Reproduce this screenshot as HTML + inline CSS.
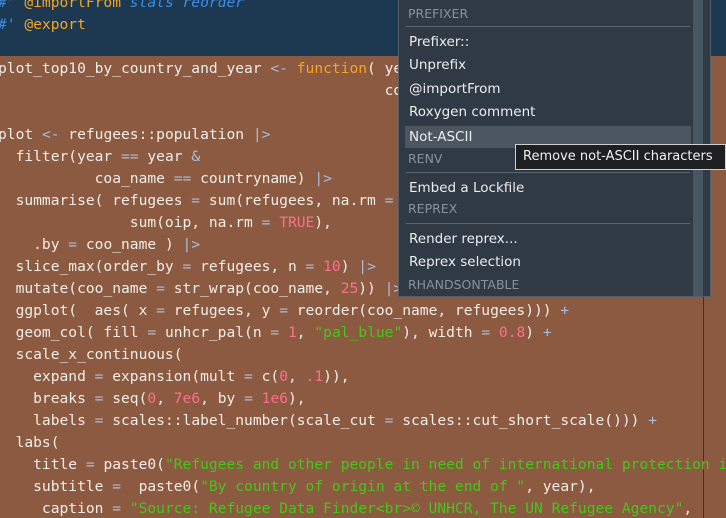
<!DOCTYPE html>
<html><head><meta charset="utf-8"><style>
html,body{margin:0;width:726px;height:518px;overflow:hidden;}
body{position:relative;background:#8b5a40;}
#blue{position:absolute;left:0;top:0;width:726px;height:56px;background:#1d3851;}
#code{position:absolute;left:-2px;top:-8px;width:728px;overflow:hidden;font-family:"DejaVu Sans Mono","Liberation Mono",monospace;font-size:14.6px;line-height:22px;color:#f2ede8;white-space:pre;}
.o{color:#a9bde0}.k{color:#f5a623}.s{color:#45c81a}.n{color:#ff6f8e}.c{color:#3d8ee6;font-style:italic}.t{color:#f5a623}
#margin{position:absolute;left:703px;top:0;width:1px;height:518px;background:#2a3550;}
#menu{position:absolute;left:398px;top:-2px;width:311px;height:297px;background:#2f3a44;border:1px solid #55606b;font-family:"DejaVu Sans","Liberation Sans",sans-serif;font-size:13.5px;color:#ebedef;}
#sb{position:absolute;left:294px;top:0;width:10px;height:297px;background:#4a5661;}
.h{position:absolute;left:9px;color:#8a9199;font-size:12.5px;}
.i{position:absolute;left:10px;}
.sep{position:absolute;left:7px;width:284px;height:1px;background:#5a6570;}
#hl{position:absolute;left:6px;top:127px;width:286px;height:22px;background:#4c5661;}
#tip{position:absolute;left:515px;top:144px;width:202px;height:24px;background:#1e1f21;border:1px solid #cfcfcf;font-family:"DejaVu Sans","Liberation Sans",sans-serif;font-size:13px;color:#f0f0f0;line-height:24px;padding-left:7px;white-space:nowrap;overflow:hidden;}
</style></head><body>
<div id="blue"></div>
<div id="margin"></div>
<div id="code"><span class="c">#' </span><span class="t">@importFrom</span><span class="c"> stats reorder</span>
<span class="c">#' </span><span class="t">@export</span>

plot_top10_by_country_and_year <span class="o">&lt;-</span> <span class="k">function</span>( year,
                                            countryname) {

plot <span class="o">&lt;-</span> refugees::population <span class="o">|&gt;</span>
  filter(year <span class="o">==</span> year <span class="o">&amp;</span>
           coa_name <span class="o">==</span> countryname) <span class="o">|&gt;</span>
  summarise( refugees <span class="o">=</span> sum(refugees, na.rm <span class="o">=</span> <span class="n">TRUE</span>),
               sum(oip, na.rm <span class="o">=</span> <span class="n">TRUE</span>),
    .by <span class="o">=</span> coo_name ) <span class="o">|&gt;</span>
  slice_max(order_by <span class="o">=</span> refugees, n <span class="o">=</span> <span class="n">10</span>) <span class="o">|&gt;</span>
  mutate(coo_name <span class="o">=</span> str_wrap(coo_name, <span class="n">25</span>)) <span class="o">|&gt;</span>
  ggplot(  aes( x <span class="o">=</span> refugees, y <span class="o">=</span> reorder(coo_name, refugees))) <span class="o">+</span>
  geom_col( fill <span class="o">=</span> unhcr_pal(n <span class="o">=</span> <span class="n">1</span>, <span class="s">"pal_blue"</span>), width <span class="o">=</span> <span class="n">0.8</span>) <span class="o">+</span>
  scale_x_continuous(
    expand <span class="o">=</span> expansion(mult <span class="o">=</span> c(<span class="n">0</span>, <span class="n">.1</span>)),
    breaks <span class="o">=</span> seq(<span class="n">0</span>, <span class="n">7e6</span>, by <span class="o">=</span> <span class="n">1e6</span>),
    labels <span class="o">=</span> scales::label_number(scale_cut <span class="o">=</span> scales::cut_short_scale())) <span class="o">+</span>
  labs(
    title <span class="o">=</span> paste0(<span class="s">"Refugees and other people in need of international protection in "</span>, year),
    subtitle <span class="o">=</span>  paste0(<span class="s">"By country of origin at the end of "</span>, year),
     caption <span class="o">=</span> <span class="s">"Source: Refugee Data Finder&lt;br&gt;© UNHCR, The UN Refugee Agency"</span>,</div>
<div id="menu">
<div id="sb"></div>
<div id="hl"></div>
<div class="h" style="top:7px">PREFIXER</div>
<div class="sep" style="top:27px"></div>
<div class="i" style="top:35px">Prefixer::</div>
<div class="i" style="top:58px">Unprefix</div>
<div class="i" style="top:82px">@importFrom</div>
<div class="i" style="top:105px">Roxygen comment</div>
<div class="i" style="top:130px">Not-ASCII</div>
<div class="h" style="top:152px">RENV</div>
<div class="sep" style="top:173px"></div>
<div class="i" style="top:181px">Embed a Lockfile</div>
<div class="h" style="top:202px">REPREX</div>
<div class="sep" style="top:224px"></div>
<div class="i" style="top:232px">Render reprex...</div>
<div class="i" style="top:255px">Reprex selection</div>
<div class="h" style="top:278px">RHANDSONTABLE</div>
</div>
<div id="tip">Remove not-ASCII characters</div>
</body></html>
